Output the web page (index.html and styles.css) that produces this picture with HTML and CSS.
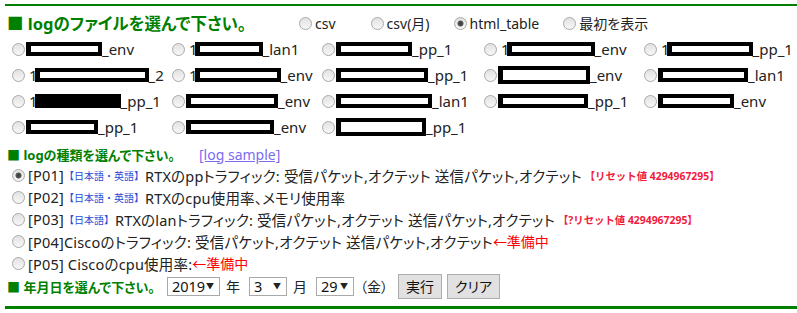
FILE: index.html
```html
<!DOCTYPE html>
<html lang="ja">
<head>
    <meta charset="UTF-8" />
    <title>log viewer</title>
    <link rel="stylesheet" href="styles.css">
</head>
<body>
<div class="page">
    <div class="rule"></div>

    <div class="head-row">
        <h2 class="sec-title big">■ logのファイルを選んで下さい。</h2>
        <label class="opt opt-first"><input class="radio" type="radio" name="fmt">csv</label>
        <label class="opt"><input class="radio" type="radio" name="fmt">csv(月)</label>
        <label class="opt"><input class="radio" type="radio" name="fmt" checked>html_table</label>
        <label class="opt"><input class="radio" type="radio" name="fmt">最初を表示</label>
    </div>

    <div class="file-grid">
        <label class="file"><input class="radio" type="radio" name="file"><span class="mask w76"></span>_env</label>
        <label class="file"><input class="radio" type="radio" name="file">1<span class="mask w68"></span>_lan1</label>
        <label class="file"><input class="radio" type="radio" name="file"><span class="mask w76"></span>_pp_1</label>
        <label class="file"><input class="radio" type="radio" name="file">1<span class="mask w88"></span>_env</label>
        <label class="file"><input class="radio" type="radio" name="file">1<span class="mask w86"></span>_pp_1</label>

        <label class="file"><input class="radio" type="radio" name="file">1<span class="mask w114"></span>_2</label>
        <label class="file"><input class="radio" type="radio" name="file">1<span class="mask w86"></span>_env</label>
        <label class="file"><input class="radio" type="radio" name="file"><span class="mask w92"></span>_pp_1</label>
        <label class="file"><input class="radio" type="radio" name="file"><span class="mask w92 tall"></span>_env</label>
        <label class="file"><input class="radio" type="radio" name="file"><span class="mask w90"></span>_lan1</label>

        <label class="file"><input class="radio" type="radio" name="file">1<span class="mask w86 solid"></span>_pp_1</label>
        <label class="file"><input class="radio" type="radio" name="file"><span class="mask w92"></span>_env</label>
        <label class="file"><input class="radio" type="radio" name="file"><span class="mask w96"></span>_lan1</label>
        <label class="file"><input class="radio" type="radio" name="file"><span class="mask w90"></span>_pp_1</label>
        <label class="file"><input class="radio" type="radio" name="file"><span class="mask w76"></span>_env</label>

        <label class="file"><input class="radio" type="radio" name="file"><span class="mask w72"></span>_pp_1</label>
        <label class="file"><input class="radio" type="radio" name="file"><span class="mask w88"></span>_env</label>
        <label class="file"><input class="radio" type="radio" name="file"><span class="mask w90 tall"></span>_pp_1</label>
    </div>

    <div class="sec-row">
        <h3 class="sec-title">■ logの種類を選んで下さい。</h3>
        <a class="sample" href="#">[log sample]</a>
    </div>

    <ul class="log-list">
        <li><label><input class="radio" type="radio" name="kind" checked>[P01] <span class="tag">【日本語・英語】</span>RTXのppトラフィック: 受信パケット,オクテット 送信パケット,オクテット <span class="reset">【リセット値 4294967295】</span></label></li>
        <li><label><input class="radio" type="radio" name="kind">[P02] <span class="tag">【日本語・英語】</span>RTXのcpu使用率、メモリ使用率</label></li>
        <li><label><input class="radio" type="radio" name="kind">[P03] <span class="tag">【日本語】</span>RTXのlanトラフィック: 受信パケット,オクテット 送信パケット,オクテット <span class="reset">【?リセット値 4294967295】</span></label></li>
        <li><label><input class="radio" type="radio" name="kind">[P04]Ciscoのトラフィック: 受信パケット,オクテット 送信パケット,オクテット<span class="wip">←準備中</span></label></li>
        <li><label><input class="radio" type="radio" name="kind">[P05] Ciscoのcpu使用率: <span class="wip">←準備中</span></label></li>
    </ul>

    <div class="date-row">
        <h3 class="sec-title">■ 年月日を選んで下さい。</h3>
        <span class="sel w52"><select><option>2019</option></select></span>
        <span class="unit">年</span>
        <span class="sel w38"><select><option>3</option></select></span>
        <span class="unit">月</span>
        <span class="sel w38"><select><option>29</option></select></span>
        <span class="dow">（金）</span>
        <button class="btn" type="button">実行</button>
        <button class="btn" type="button">クリア</button>
    </div>

    <div class="rule bottom"></div>
</div>
</body>
</html>
```

FILE: styles.css
```css
* {
    margin: 0; padding: 0; box-sizing: border-box;
}
body {
    background: #fff;
    color: #222;
    font-family: 'Noto Sans', 'Noto Sans CJK JP', sans-serif;
    font-size: 14px;
    font-feature-settings: "palt";
}
.page {
    padding: 4px 0 0 5px;
}
.rule {
    height: 2px;
    background: #008000;
}
.rule.bottom {
    height: 3px;
    margin-top: 8px;
}

/* radio like the old windows look */
.radio {
    appearance: none;
    -webkit-appearance: none;
    width: 13px;
    height: 13px;
    border-radius: 50%;
    border: 1px solid #a9a9a9;
    background: linear-gradient(#e2e2e2, #f7f7f7);
    margin: 0 3px 0 7px;
    vertical-align: middle;
    flex: none;
}
.radio:checked {
    background: radial-gradient(circle, #3c3c3c 0, #555 2.6px, transparent 3.4px),
                linear-gradient(#e2e2e2, #f7f7f7);
}

.sec-title {
    color: #008000;
    font-weight: bold;
    font-size: 13px;
    display: inline-block;
}
.sec-title.big {
    font-size: 16.5px;
}

.head-row {
    display: flex;
    align-items: center;
    height: 26px;
    margin-top: 4px;
    padding-left: 2px;
}
.head-row .sec-title {
    margin-right: 46px;
}
.opt {
    display: flex;
    align-items: center;
    margin-right: 17px;
}
.opt-first {
    margin-right: 28px;
}

.file-grid {
    display: grid;
    grid-template-columns: 160px 150px 162px 160px 1fr;
    grid-auto-rows: 26px;
    font-size: 15px;
}
.file {
    display: flex;
    align-items: center;
    white-space: nowrap;
}
.file .radio {
    margin-right: 4px;
}
.mask {
    display: inline-block;
    height: 14px;
    background: #fff;
    border: 4px solid #000;
    border-left-width: 5px;
    margin-left: -3px;
}
.mask.tall {
    height: 18px;
}
.mask.solid {
    background: #000;
}
.w68 { width: 68px; }
.w72 { width: 72px; }
.w76 { width: 76px; }
.w86 { width: 86px; }
.w88 { width: 88px; }
.w90 { width: 90px; }
.w92 { width: 92px; }
.w96 { width: 96px; }
.w114 { width: 114px; }

.sec-row {
    display: flex;
    align-items: center;
    height: 20px;
    margin-top: 4px;
    padding-left: 2px;
}
.sample {
    color: #7b6cf0;
    margin-left: 24px;
    font-size: 14px;
}

.log-list {
    list-style: none;
    font-size: 14.5px;
    letter-spacing: 0.2px;
}
.log-list li {
    height: 22px;
    display: flex;
    align-items: center;
    white-space: nowrap;
}
.log-list label {
    display: flex;
    align-items: center;
}
.tag {
    color: #2a4bd7;
    font-size: 10px;
    letter-spacing: 0;
    font-feature-settings: normal;
    margin-right: 1px;
}
.reset {
    color: #f21a3c;
    font-size: 10.4px;
    font-weight: bold;
    letter-spacing: 0;
    font-feature-settings: normal;
    margin-left: 3px;
}
.wip {
    color: #ff0000;
    font-size: 14px;
    letter-spacing: 0;
}

.date-row {
    display: flex;
    align-items: center;
    height: 24px;
    padding-left: 2px;
}
.date-row .sec-title {
    margin-right: 12px;
}
.sel {
    position: relative;
    display: inline-block;
    height: 19px;
}
.sel select {
    appearance: none;
    -webkit-appearance: none;
    width: 100%;
    height: 19px;
    border: 1px solid #a9a9a9;
    background: #fff;
    font: inherit;
    font-size: 14.5px;
    line-height: 17px;
    padding: 0 0 0 4px;
    color: #111;
}
.sel::after {
    content: "▼";
    position: absolute;
    right: 6px;
    top: 4px;
    font-size: 8px;
    line-height: 10px;
    color: #222;
    pointer-events: none;
}
.w52 { width: 53px; }
.w38 { width: 38px; }
.unit {
    margin: 0 9px 0 6px;
}
.dow {
    margin: 0 10px 0 6px;
}
.btn {
    height: 25px;
    padding: 0 7px;
    border: 1px solid #adadad;
    background: #e1e1e1;
    font: inherit;
    font-size: 14px;
    color: #111;
    margin-right: 5px;
}
```
